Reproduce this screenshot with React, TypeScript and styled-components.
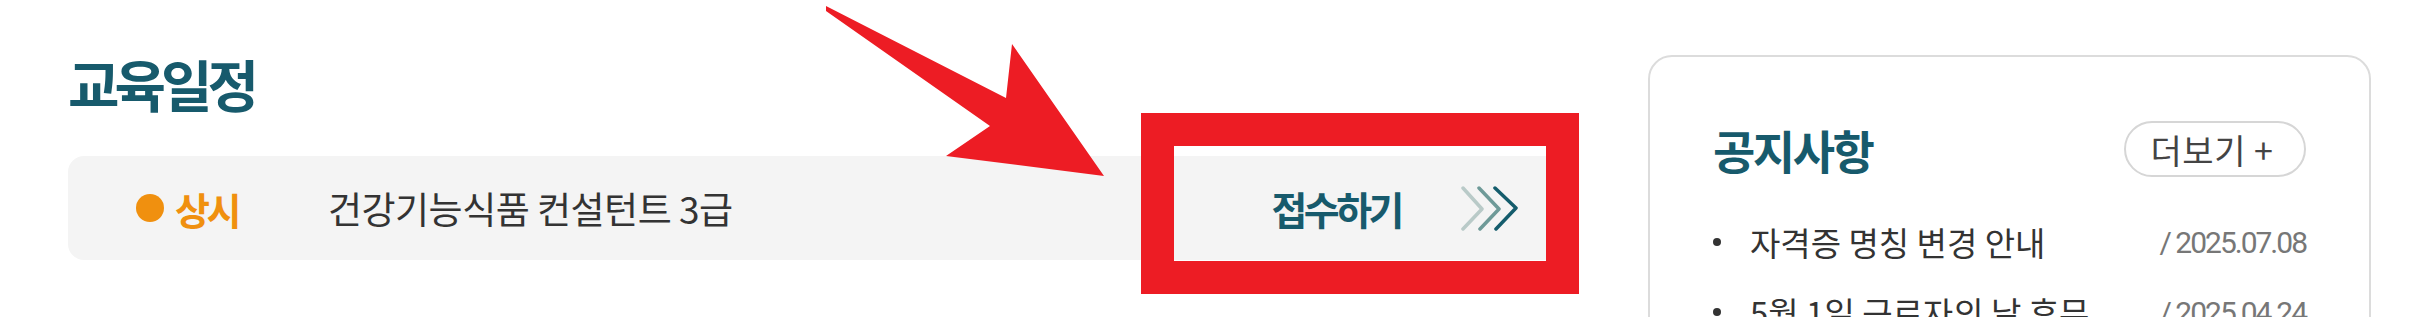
import styled, { createGlobalStyle } from "styled-components";

const GlobalStyle = createGlobalStyle`
  html, body {
    margin: 0;
    padding: 0;
    background: #fff;
  }
  body {
    font-family: "Noto Sans CJK KR", "Noto Sans", sans-serif;
    color: #333;
  }
  * {
    box-sizing: border-box;
  }
`;

const schedules = [
  { status: "상시", title: "건강기능식품 컨설턴트 3급" },
];

const notices = [
  { title: "자격증 명칭 변경 안내", date: "2025.07.08" },
  { title: "5월 1일 근로자의 날 휴무", date: "2025.04.24" },
];

const Page = styled.main`
  position: relative;
  display: flex;
  align-items: flex-start;
  gap: 88px;
  width: 2412px;
  height: 317px;
  overflow: hidden;
  padding: 55px 41px 0 68px;
`;

const Schedule = styled.section`
  width: 1492px;
  display: flex;
  flex-direction: column;
  gap: 45px;
`;

const SectionTitle = styled.h2<{ $size: number; $spacing: number }>`
  margin: 0;
  font-size: ${(p) => p.$size}px;
  line-height: 1;
  font-weight: 700;
  letter-spacing: ${(p) => p.$spacing}px;
  color: #175a6c;
`;

const ScheduleList = styled.ul`
  list-style: none;
  margin: 0;
  padding: 0;
`;

const ScheduleRow = styled.li`
  display: flex;
  align-items: center;
  height: 104px;
  padding: 0 41px 0 68px;
  border-radius: 16px;
  background: #f4f4f4;
`;

const Status = styled.span`
  display: flex;
  align-items: center;
  gap: 11px;
  width: 192px;
  font-size: 38px;
  font-weight: 700;
  letter-spacing: -3.5px;
  color: #f0900f;

  &::before {
    content: "";
    width: 28px;
    height: 28px;
    border-radius: 50%;
    background: #f0900f;
  }
`;

const CourseName = styled.span`
  flex: 1;
  font-size: 37px;
  letter-spacing: -0.5px;
  color: #333;
`;

const ApplyLink = styled.a`
  display: flex;
  align-items: center;
  gap: 58px;
  font-size: 39px;
  font-weight: 700;
  letter-spacing: -3.5px;
  color: #175a6c;
  text-decoration: none;
`;

const Chevrons = () => (
  <svg width="60" height="46" viewBox="0 0 60 46" fill="none" strokeWidth="3.5" strokeLinecap="round" strokeLinejoin="round">
    <polyline points="4,3 23,24 4,44" stroke="#b9cac8" />
    <polyline points="20,3 40,24 21,44" stroke="#6e9a98" />
    <polyline points="36,3 57,23 37,44" stroke="#145c6c" />
  </svg>
);

const NoticeCard = styled.aside`
  width: 723px;
  min-height: 330px;
  padding: 64px 63px 0;
  border: 2px solid #dcdcdc;
  border-radius: 24px;
  background: #fff;
`;

const CardHeader = styled.div`
  display: flex;
  align-items: center;
  justify-content: space-between;
  height: 56px;
`;

const MoreButton = styled.button`
  display: flex;
  align-items: center;
  justify-content: center;
  width: 182px;
  height: 56px;
  padding: 0 6px 0 0;
  border: 2px solid #d6d6d6;
  border-radius: 28px;
  background: #fff;
  font-family: inherit;
  font-size: 34px;
  letter-spacing: 0.5px;
  color: #444;
`;

const NoticeList = styled.ul`
  list-style: none;
  margin: 30px 0 0;
  padding: 0;
`;

const NoticeItem = styled.li`
  display: flex;
  align-items: center;
  height: 70px;
  font-size: 33px;
  color: #333;

  &::before {
    content: "";
    width: 8px;
    height: 8px;
    margin-right: 29px;
    border-radius: 50%;
    background: #333;
  }
`;

const NoticeTitle = styled.span`
  flex: 1;
`;

const NoticeDate = styled.span`
  font-family: Roboto, "Noto Sans CJK KR", sans-serif;
  font-size: 30px;
  letter-spacing: -2px;
  color: #777;
`;

const Highlight = styled.div`
  position: absolute;
  left: 1141px;
  top: 113px;
  width: 438px;
  height: 181px;
  border: 33px solid #ed1c24;
  pointer-events: none;
`;

const ArrowMark = styled.svg`
  position: absolute;
  left: 820px;
  top: 0;
  pointer-events: none;
`;

export default function App() {
  return (
    <>
      <GlobalStyle />
      <Page>
        <Schedule>
          <SectionTitle $size={56} $spacing={-5}>교육일정</SectionTitle>
          <ScheduleList>
            {schedules.map((s) => (
              <ScheduleRow key={s.title}>
                <Status>{s.status}</Status>
                <CourseName>{s.title}</CourseName>
                <ApplyLink href="#">
                  접수하기
                  <Chevrons />
                </ApplyLink>
              </ScheduleRow>
            ))}
          </ScheduleList>
        </Schedule>

        <NoticeCard>
          <CardHeader>
            <SectionTitle $size={46} $spacing={-2.5}>공지사항</SectionTitle>
            <MoreButton type="button">더보기 +</MoreButton>
          </CardHeader>
          <NoticeList>
            {notices.map((n) => (
              <NoticeItem key={n.date}>
                <NoticeTitle>{n.title}</NoticeTitle>
                <NoticeDate>/ {n.date}</NoticeDate>
              </NoticeItem>
            ))}
          </NoticeList>
        </NoticeCard>

        <Highlight />
        <ArrowMark width="290" height="185" viewBox="0 0 290 185">
          <polygon points="6,6 186,98 192,44 284,176 126,156 170,126 6,11" fill="#ed1c24" />
        </ArrowMark>
      </Page>
    </>
  );
}
